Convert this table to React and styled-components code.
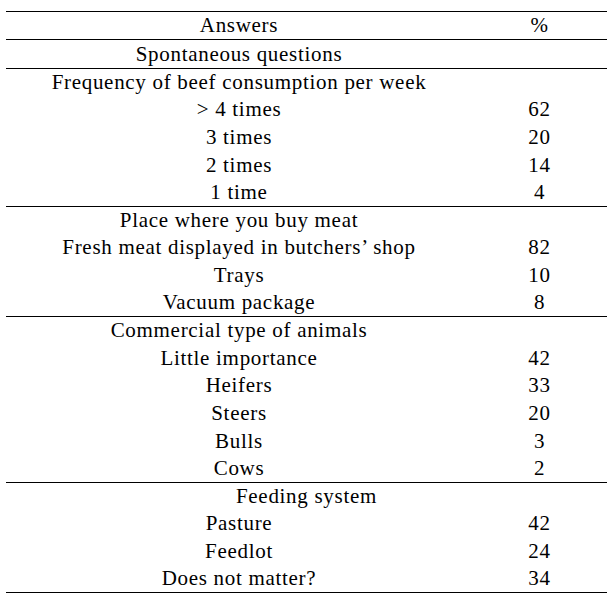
import React from "react";
import styled, { createGlobalStyle } from "styled-components";

const GlobalStyle = createGlobalStyle`
  html, body {
    margin: 0;
    padding: 0;
    background: #ffffff;
  }
  body {
    font-family: "Liberation Serif", "Times New Roman", serif;
    color: #000;
  }
`;

const Page = styled.div`
  padding: 11px 6px 0 6px;
  width: 601px;
`;

const Table = styled.table`
  width: 601px;
  border-collapse: collapse;
  font-size: 21px;
  letter-spacing: 0.7px;
  table-layout: fixed;
`;

const Row = styled.tr`
  height: ${({ $h }) => $h || 27.6}px;
  border-top: ${({ $top }) => ($top ? "1px solid #000" : "none")};
  border-bottom: ${({ $rule }) => ($rule ? "1px solid #000" : "none")};
`;

const Cell = styled.td`
  padding: 0;
  text-align: center;
  vertical-align: middle;
  white-space: nowrap;
  line-height: 1;
`;

const sections = [
  {
    title: "Frequency of beef consumption per week",
    rows: [
      ["> 4 times", "62"],
      ["3 times", "20"],
      ["2 times", "14"],
      ["1 time", "4"],
    ],
  },
  {
    title: "Place where you buy meat",
    rows: [
      ["Fresh meat displayed in butchers’ shop", "82"],
      ["Trays", "10"],
      ["Vacuum package", "8"],
    ],
  },
  {
    title: "Commercial type of animals",
    rows: [
      ["Little importance", "42"],
      ["Heifers", "33"],
      ["Steers", "20"],
      ["Bulls", "3"],
      ["Cows", "2"],
    ],
  },
  {
    title: "Feeding system",
    wide: true,
    rows: [
      ["Pasture", "42"],
      ["Feedlot", "24"],
      ["Does not matter?", "34"],
    ],
  },
];

export default function App() {
  return (
    <>
      <GlobalStyle />
      <Page>
        <Table>
          <colgroup>
            <col style={{ width: "466px" }} />
            <col style={{ width: "135px" }} />
          </colgroup>
          <tbody>
            <Row $top $rule $h={28}>
              <Cell>Answers</Cell>
              <Cell>%</Cell>
            </Row>
            <Row $rule $h={29}>
              <Cell>Spontaneous questions</Cell>
              <Cell />
            </Row>
            {sections.map((s) => (
              <React.Fragment key={s.title}>
                <Row>
                  {s.wide ? (
                    <Cell colSpan={2}>{s.title}</Cell>
                  ) : (
                    <>
                      <Cell>{s.title}</Cell>
                      <Cell />
                    </>
                  )}
                </Row>
                {s.rows.map(([label, pct], i) => (
                  <Row key={label} $rule={i === s.rows.length - 1}>
                    <Cell>{label}</Cell>
                    <Cell>{pct}</Cell>
                  </Row>
                ))}
              </React.Fragment>
            ))}
          </tbody>
        </Table>
      </Page>
    </>
  );
}
